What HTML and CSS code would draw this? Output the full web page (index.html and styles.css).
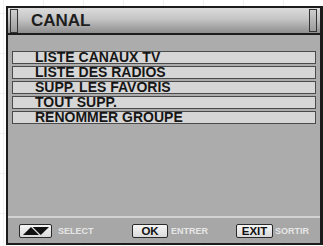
FILE: index.html
```html
<!DOCTYPE html>
<html>
<head>
<meta charset="utf-8">
<link rel="stylesheet" href="styles.css">
</head>
<body>
<div class="frame">
  <div class="titlebar">
    <span class="handle handle-left"></span>
    <span class="title">CANAL</span>
    <span class="handle handle-right"></span>
  </div>
  <div class="content">
    <div class="item">LISTE CANAUX TV</div>
    <div class="item">LISTE DES RADIOS</div>
    <div class="item">SUPP. LES FAVORIS</div>
    <div class="item">TOUT SUPP.</div>
    <div class="item">RENOMMER GROUPE</div>
  </div>
  <div class="footer">
    <div class="group group-select">
      <span class="btn btn-arrows">
        <svg width="26" height="8" viewBox="0 0 26 8">
          <polygon points="0,8 8,0 16,8" fill="#111"/>
          <polygon points="9.6,0 26,0 17.8,8" fill="#111"/>
        </svg>
      </span>
      <span class="label">SELECT</span>
    </div>
    <div class="group group-ok">
      <span class="btn btn-ok">OK</span>
      <span class="label">ENTRER</span>
    </div>
    <div class="group group-exit">
      <span class="btn btn-exit">EXIT</span>
      <span class="label">SORTIR</span>
    </div>
  </div>
</div>
</body>
</html>
```

FILE: styles.css
```css
html, body {
  margin: 0;
  padding: 0;
}
body {
  width: 323px;
  height: 246px;
  overflow: hidden;
  background-color: #ffffff;
  background-image:
    linear-gradient(to right, #f1f1f1 1px, transparent 1px),
    linear-gradient(to bottom, #f1f1f1 1px, transparent 1px);
  background-size: 40px 40px;
  background-position: 3px 13px;
  font-family: "Liberation Sans", Arial, sans-serif;
}
.frame {
  margin: 6px 0 0 6px;
  width: 312px;
  height: 235px;
  border: 2px solid #1c1c1c;
  border-right-width: 3px;
  display: flex;
  flex-direction: column;
  background: #acacac;
}
.titlebar {
  height: 25px;
  flex: none;
  display: flex;
  align-items: center;
  background: linear-gradient(to bottom, #dcdcdc 0%, #c4c4c4 45%, #8e8e8e 100%);
  border-bottom: 2px solid #1c1c1c;
  padding: 0 3px 0 2px;
}
.handle {
  width: 6px;
  height: 22px;
  border: 1px solid #333;
  background: linear-gradient(to bottom, #cfcfcf, #9a9a9a);
  flex: none;
}
.handle-right {
  height: 21px;
}
.title {
  flex: 1;
  margin-left: 13px;
  font-size: 17px;
  font-weight: bold;
  color: #1e1e1e;
  line-height: 25px;
}
.content {
  flex: 1;
  padding: 16px 4px 0 4px;
  display: flex;
  flex-direction: column;
  gap: 2px;
}
.item {
  height: 13px;
  box-sizing: border-box;
  border: 1px solid #4a4a4a;
  background: #d6d6d6;
  padding-left: 22px;
  font-size: 14px;
  font-weight: bold;
  line-height: 11px;
  color: #161616;
  white-space: nowrap;
}
.footer {
  height: 25px;
  flex: none;
  border-top: 2px solid #d2d2d2;
  background: #a7a7a7;
  display: flex;
  align-items: center;
  padding-left: 11px;
}
.group {
  display: flex;
  align-items: center;
}
.group-select {
  width: 113px;
}
.group-ok {
  width: 104px;
}
.btn {
  height: 14px;
  box-sizing: border-box;
  border: 1px solid #2a2a2a;
  border-radius: 2px;
  background: linear-gradient(to bottom, #f6f6f6, #dadada);
  display: flex;
  align-items: center;
  justify-content: center;
  font-size: 11.5px;
  font-weight: bold;
  color: #111;
  line-height: 12px;
}
.btn-arrows {
  width: 33px;
}
.btn-ok {
  width: 36px;
}
.btn-exit {
  width: 37px;
}
.label {
  font-size: 9px;
  font-weight: bold;
  color: #e6e6e6;
  margin-left: 3px;
}
.group-select .label {
  margin-left: 6px;
}
.group-exit .label {
  margin-left: 2px;
}
```
